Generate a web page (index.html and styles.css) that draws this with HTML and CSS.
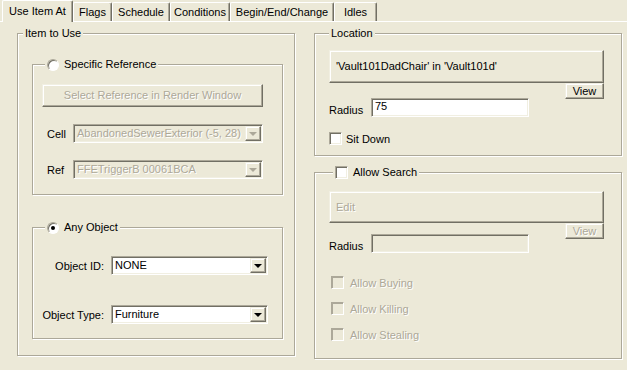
FILE: index.html
```html
<!DOCTYPE html>
<html lang="en">
<head>
    <meta charset="UTF-8">
    <title>Use Item At</title>
    <link rel="stylesheet" href="styles.css">
</head>
<body>
    <div class="tabs">
        <div class="tab active tab-use">Use Item At</div>
        <div class="tab tab-flags">Flags</div>
        <div class="tab tab-schedule">Schedule</div>
        <div class="tab tab-conditions">Conditions</div>
        <div class="tab tab-begin">Begin/End/Change</div>
        <div class="tab tab-idles">Idles</div>
    </div>

    <div class="page">
        <!-- columna izquierda -->
        <div class="group item-group">
            <div class="group-title item-title">Item to Use</div>

            <div class="group inner-group specific-group">
                <div class="group-title radio-title">
                    <span class="radio"></span>
                    <span>Specific Reference</span>
                </div>
                <div class="button disabled select-btn">Select Reference in Render Window</div>
                <div class="row cell-row">
                    <span class="field-label">Cell</span>
                    <div class="combo disabled wide-combo">
                        <span class="combo-text">AbandonedSewerExterior (-5, 28)</span>
                        <span class="combo-btn"></span>
                    </div>
                </div>
                <div class="row ref-row">
                    <span class="field-label">Ref</span>
                    <div class="combo disabled wide-combo">
                        <span class="combo-text">FFETriggerB 00061BCA</span>
                        <span class="combo-btn"></span>
                    </div>
                </div>
            </div>

            <div class="group inner-group any-group">
                <div class="group-title radio-title">
                    <span class="radio checked"></span>
                    <span>Any Object</span>
                </div>
                <div class="row object-row id-row">
                    <span>Object ID:</span>
                    <div class="combo object-combo">
                        <span class="combo-text">NONE</span>
                        <span class="combo-btn"></span>
                    </div>
                </div>
                <div class="row object-row type-row">
                    <span>Object Type:</span>
                    <div class="combo object-combo">
                        <span class="combo-text">Furniture</span>
                        <span class="combo-btn"></span>
                    </div>
                </div>
            </div>
        </div>

        <!-- columna derecha -->
        <div class="right-col">
            <div class="group location-group">
                <div class="group-title location-title">Location</div>
                <div class="button big-btn">'Vault101DadChair' in 'Vault101d'</div>
                <div class="button view-btn">View</div>
                <div class="row radius-row">
                    <span class="radius-label">Radius</span>
                    <div class="textbox">75</div>
                </div>
                <div class="row check-row sit-row">
                    <span class="checkbox"></span>
                    <span>Sit Down</span>
                </div>
            </div>

            <div class="group search-group">
                <div class="group-title check-title">
                    <span class="checkbox"></span>
                    <span>Allow Search</span>
                </div>
                <div class="button big-btn disabled edit-btn">Edit</div>
                <div class="button view-btn disabled">View</div>
                <div class="row radius-row search-radius">
                    <span class="radius-label">Radius</span>
                    <div class="textbox disabled"></div>
                </div>
                <div class="row check-row allow-row first-allow disabled">
                    <span class="checkbox"></span>
                    <span>Allow Buying</span>
                </div>
                <div class="row check-row allow-row disabled">
                    <span class="checkbox"></span>
                    <span>Allow Killing</span>
                </div>
                <div class="row check-row allow-row disabled">
                    <span class="checkbox"></span>
                    <span>Allow Stealing</span>
                </div>
            </div>
        </div>
    </div>
</body>
</html>
```

FILE: styles.css
```css
body {
    margin: 0;
    width: 627px;
    height: 370px;
    overflow: hidden;
    background-color: #ece9d8;
    font-family: "Liberation Sans", Arial, sans-serif;
    font-size: 11px;
    color: #000;
}

/* pestañas */
.tabs {
    display: flex;
    align-items: flex-end;
    height: 21px;
    padding-left: 2px;
    border-bottom: 1px solid #fff;
}

.tab {
    box-sizing: border-box;
    height: 19px;
    line-height: 18px;
    text-align: center;
    border: 1px solid #fff;
    border-right-color: #716f64;
    border-bottom: none;
    border-radius: 2px 2px 0 0;
    box-shadow: inset -1px 0 #aca899;
    white-space: nowrap;
}

.tab.active {
    position: relative;
    z-index: 1;
    height: 22px;
    line-height: 20px;
    margin-bottom: -1px;
    background-color: #ece9d8;
}

.tab-use { width: 71px; }
.tab-flags { width: 39px; }
.tab-schedule { width: 58px; }
.tab-conditions { width: 60px; }
.tab-begin { width: 104px; }
.tab-idles { width: 43px; }

/* pagina */
.page {
    display: grid;
    grid-template-columns: 278px 308px;
    column-gap: 19px;
    align-items: start;
    padding: 11px 0 0 17px;
}

.group {
    box-sizing: border-box;
    border: 1px solid #aca899;
    box-shadow: inset 1px 1px #fff, 1px 1px #fff;
}

.group-title {
    display: flex;
    align-items: center;
    gap: 5px;
    width: fit-content;
    height: 13px;
    line-height: 13px;
    margin-top: -7px;
    padding: 0 2px;
    background-color: #ece9d8;
    white-space: nowrap;
}

.item-group { height: 323px; }
.item-title { margin-left: 5px; }

.inner-group {
    width: 251px;
    margin-left: 14px;
}

.specific-group {
    height: 131px;
    margin-top: 24px;
}

.any-group {
    height: 112px;
    margin-top: 32px;
}

.radio-title { margin-left: 12px; }

.radio {
    box-sizing: border-box;
    position: relative;
    width: 12px;
    height: 12px;
    border-radius: 50%;
    border: 1px solid;
    border-color: #aca899 #fff #fff #aca899;
    box-shadow: inset 1px 1px #716f64;
    background-color: #fff;
}

.radio.checked::after {
    content: "";
    position: absolute;
    left: 3px;
    top: 3px;
    width: 4px;
    height: 4px;
    border-radius: 50%;
    background-color: #000;
}

/* botones */
.button {
    box-sizing: border-box;
    border: 1px solid;
    border-color: #f1efe2 #716f64 #716f64 #f1efe2;
    box-shadow: inset -1px -1px #aca899, inset 1px 1px #fff;
    white-space: nowrap;
}

.disabled,
.disabled .combo-text {
    color: #aca899;
    text-shadow: 1px 1px #fff;
}

.select-btn {
    width: 221px;
    height: 23px;
    line-height: 21px;
    margin: 13px 0 0 9px;
    text-align: center;
}

.row {
    display: flex;
    align-items: center;
}

.cell-row { margin: 17px 0 0 14px; }
.ref-row { margin: 17px 0 0 14px; }

.field-label { width: 26px; }

/* combos */
.combo {
    box-sizing: border-box;
    display: flex;
    height: 19px;
    border: 1px solid;
    border-color: #aca899 #fff #fff #aca899;
    box-shadow: inset 1px 1px #716f64, inset -1px -1px #f1efe2;
    background-color: #fff;
    padding: 1px;
}

.combo.disabled { background-color: #ece9d8; }

.combo-text {
    flex: 1;
    padding-left: 2px;
    line-height: 15px;
    white-space: nowrap;
    overflow: hidden;
}

.combo-btn {
    box-sizing: border-box;
    position: relative;
    width: 16px;
    border: 1px solid;
    border-color: #f1efe2 #716f64 #716f64 #f1efe2;
    box-shadow: inset -1px -1px #aca899, inset 1px 1px #fff;
    background-color: #ece9d8;
}

.combo-btn::after {
    content: "";
    position: absolute;
    left: 3px;
    top: 5px;
    border-left: 4px solid transparent;
    border-right: 4px solid transparent;
    border-top: 4px solid #000;
}

.disabled .combo-btn::after { border-top-color: #aca899; }

.wide-combo { width: 190px; }

.object-row {
    justify-content: flex-end;
    gap: 7px;
    margin-right: 14px;
}

.id-row { margin-top: 22px; }
.type-row { margin-top: 30px; }

.object-combo { width: 157px; }

/* columna derecha */
.right-col {
    display: flex;
    flex-direction: column;
}

.location-group { height: 123px; }
.location-title { margin-left: 14px; }

.big-btn {
    width: 275px;
    height: 33px;
    line-height: 31px;
    margin: 10px 0 0 14px;
    padding-left: 6px;
}

.view-btn {
    width: 39px;
    height: 16px;
    line-height: 14px;
    margin-left: 250px;
    text-align: center;
}

.radius-row {
    margin: -1px 0 0 14px;
}

.radius-label {
    width: 42px;
    margin-top: 5px;
}

.textbox {
    box-sizing: border-box;
    width: 158px;
    height: 19px;
    line-height: 15px;
    padding-left: 3px;
    border: 1px solid;
    border-color: #aca899 #fff #fff #aca899;
    box-shadow: inset 1px 1px #716f64, inset -1px -1px #f1efe2;
    background-color: #fff;
}

.textbox.disabled { background-color: #ece9d8; }

.check-row { gap: 4px; }

.sit-row { margin: 15px 0 0 14px; }

.checkbox {
    box-sizing: border-box;
    width: 13px;
    height: 13px;
    border: 1px solid;
    border-color: #aca899 #fff #fff #aca899;
    box-shadow: inset 1px 1px #716f64, inset -1px -1px #f1efe2;
    background-color: #fff;
}

.disabled .checkbox {
    background-color: #ece9d8;
    box-shadow: inset 1px 1px #aca899;
}

.search-group {
    height: 187px;
    margin-top: 16px;
}

.check-title { margin-left: 18px; }

.edit-btn {
    height: 32px;
    line-height: 30px;
    margin-top: 12px;
}

.search-radius { margin-top: -5px; }

.allow-row {
    margin: 13px 0 0 16px;
    gap: 6px;
}

.first-allow { margin-top: 23px; }
```
